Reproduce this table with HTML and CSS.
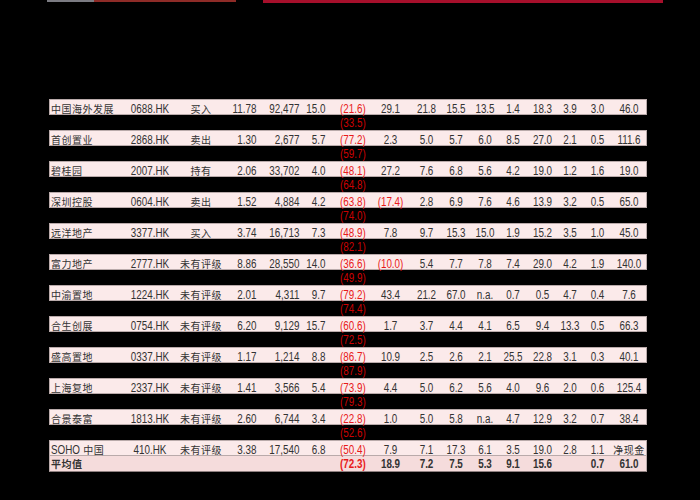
FILE: index.html
```html
<!DOCTYPE html>
<html lang="zh">
<head>
<meta charset="utf-8">
<link rel="stylesheet" href="styles.css">
</head>
<body>
<div class="bars">
  <div class="bar-gray"></div>
  <div class="bar-dark"></div>
  <div class="bar-red"></div>
</div>
<div class="table">
  <div class="row band"><div class="c l cjk">中国海外发展</div><div class="c m">0688.HK</div><div class="c m cjk">买入</div><div class="c r">11.78</div><div class="c r">92,477</div><div class="c r">15.0</div><div class="c neg red">(21.6)</div><div class="c m">29.1</div><div class="c m">21.8</div><div class="c m">15.5</div><div class="c m">13.5</div><div class="c m">1.4</div><div class="c m">18.3</div><div class="c m">3.9</div><div class="c m">3.0</div><div class="c m">46.0</div></div>
  <div class="row gap"><div class="c neg red2 col7">(33.5)</div></div>
  <div class="row band"><div class="c l cjk">首创置业</div><div class="c m">2868.HK</div><div class="c m cjk">卖出</div><div class="c r">1.30</div><div class="c r">2,677</div><div class="c r">5.7</div><div class="c neg red">(77.2)</div><div class="c m">2.3</div><div class="c m">5.0</div><div class="c m">5.7</div><div class="c m">6.0</div><div class="c m">8.5</div><div class="c m">27.0</div><div class="c m">2.1</div><div class="c m">0.5</div><div class="c m">111.6</div></div>
  <div class="row gap"><div class="c neg red2 col7">(59.7)</div></div>
  <div class="row band"><div class="c l cjk">碧桂园</div><div class="c m">2007.HK</div><div class="c m cjk">持有</div><div class="c r">2.06</div><div class="c r">33,702</div><div class="c r">4.0</div><div class="c neg red">(48.1)</div><div class="c m">27.2</div><div class="c m">7.6</div><div class="c m">6.8</div><div class="c m">5.6</div><div class="c m">4.2</div><div class="c m">19.0</div><div class="c m">1.2</div><div class="c m">1.6</div><div class="c m">19.0</div></div>
  <div class="row gap"><div class="c neg red2 col7">(64.8)</div></div>
  <div class="row band"><div class="c l cjk">深圳控股</div><div class="c m">0604.HK</div><div class="c m cjk">卖出</div><div class="c r">1.52</div><div class="c r">4,884</div><div class="c r">4.2</div><div class="c neg red">(63.8)</div><div class="c m red">(17.4)</div><div class="c m">2.8</div><div class="c m">6.9</div><div class="c m">7.6</div><div class="c m">4.6</div><div class="c m">13.9</div><div class="c m">3.2</div><div class="c m">0.5</div><div class="c m">65.0</div></div>
  <div class="row gap"><div class="c neg red2 col7">(74.0)</div></div>
  <div class="row band"><div class="c l cjk">远洋地产</div><div class="c m">3377.HK</div><div class="c m cjk">买入</div><div class="c r">3.74</div><div class="c r">16,713</div><div class="c r">7.3</div><div class="c neg red">(48.9)</div><div class="c m">7.8</div><div class="c m">9.7</div><div class="c m">15.3</div><div class="c m">15.0</div><div class="c m">1.9</div><div class="c m">15.2</div><div class="c m">3.5</div><div class="c m">1.0</div><div class="c m">45.0</div></div>
  <div class="row gap"><div class="c neg red2 col7">(82.1)</div></div>
  <div class="row band"><div class="c l cjk">富力地产</div><div class="c m">2777.HK</div><div class="c m cjk">未有评级</div><div class="c r">8.86</div><div class="c r">28,550</div><div class="c r">14.0</div><div class="c neg red">(36.6)</div><div class="c m red">(10.0)</div><div class="c m">5.4</div><div class="c m">7.7</div><div class="c m">7.8</div><div class="c m">7.4</div><div class="c m">29.0</div><div class="c m">4.2</div><div class="c m">1.9</div><div class="c m">140.0</div></div>
  <div class="row gap"><div class="c neg red2 col7">(49.9)</div></div>
  <div class="row band"><div class="c l cjk">中渝置地</div><div class="c m">1224.HK</div><div class="c m cjk">未有评级</div><div class="c r">2.01</div><div class="c r">4,311</div><div class="c r">9.7</div><div class="c neg red">(79.2)</div><div class="c m">43.4</div><div class="c m">21.2</div><div class="c m">67.0</div><div class="c m">n.a.</div><div class="c m">0.7</div><div class="c m">0.5</div><div class="c m">4.7</div><div class="c m">0.4</div><div class="c m">7.6</div></div>
  <div class="row gap"><div class="c neg red2 col7">(74.4)</div></div>
  <div class="row band"><div class="c l cjk">合生创展</div><div class="c m">0754.HK</div><div class="c m cjk">未有评级</div><div class="c r">6.20</div><div class="c r">9,129</div><div class="c r">15.7</div><div class="c neg red">(60.6)</div><div class="c m">1.7</div><div class="c m">3.7</div><div class="c m">4.4</div><div class="c m">4.1</div><div class="c m">6.5</div><div class="c m">9.4</div><div class="c m">13.3</div><div class="c m">0.5</div><div class="c m">66.3</div></div>
  <div class="row gap"><div class="c neg red2 col7">(72.5)</div></div>
  <div class="row band"><div class="c l cjk">盛高置地</div><div class="c m">0337.HK</div><div class="c m cjk">未有评级</div><div class="c r">1.17</div><div class="c r">1,214</div><div class="c r">8.8</div><div class="c neg red">(86.7)</div><div class="c m">10.9</div><div class="c m">2.5</div><div class="c m">2.6</div><div class="c m">2.1</div><div class="c m">25.5</div><div class="c m">22.8</div><div class="c m">3.1</div><div class="c m">0.3</div><div class="c m">40.1</div></div>
  <div class="row gap"><div class="c neg red2 col7">(87.9)</div></div>
  <div class="row band"><div class="c l cjk">上海复地</div><div class="c m">2337.HK</div><div class="c m cjk">未有评级</div><div class="c r">1.41</div><div class="c r">3,566</div><div class="c r">5.4</div><div class="c neg red">(73.9)</div><div class="c m">4.4</div><div class="c m">5.0</div><div class="c m">6.2</div><div class="c m">5.6</div><div class="c m">4.0</div><div class="c m">9.6</div><div class="c m">2.0</div><div class="c m">0.6</div><div class="c m">125.4</div></div>
  <div class="row gap"><div class="c neg red2 col7">(79.3)</div></div>
  <div class="row band"><div class="c l cjk">合景泰富</div><div class="c m">1813.HK</div><div class="c m cjk">未有评级</div><div class="c r">2.60</div><div class="c r">6,744</div><div class="c r">3.4</div><div class="c neg red">(22.8)</div><div class="c m">1.0</div><div class="c m">5.0</div><div class="c m">5.8</div><div class="c m">n.a.</div><div class="c m">4.7</div><div class="c m">12.9</div><div class="c m">3.2</div><div class="c m">0.7</div><div class="c m">38.4</div></div>
  <div class="row gap"><div class="c neg red2 col7">(52.6)</div></div>
  <div class="row band"><div class="c l mix"><span class="lat">SOHO</span><span class="cjk">中国</span></div><div class="c m">410.HK</div><div class="c m cjk">未有评级</div><div class="c r">3.38</div><div class="c r">17,540</div><div class="c r">6.8</div><div class="c neg red">(50.4)</div><div class="c m">7.9</div><div class="c m">7.1</div><div class="c m">17.3</div><div class="c m">6.1</div><div class="c m">3.5</div><div class="c m">19.0</div><div class="c m">2.8</div><div class="c m">1.1</div><div class="c m cjk">净现金</div></div>
  <div class="row band avg"><div class="c l cjk">平均值</div><div class="c m"></div><div class="c m"></div><div class="c r"></div><div class="c r"></div><div class="c r"></div><div class="c neg red">(72.3)</div><div class="c m">18.9</div><div class="c m">7.2</div><div class="c m">7.5</div><div class="c m">5.3</div><div class="c m">9.1</div><div class="c m">15.6</div><div class="c m"></div><div class="c m">0.7</div><div class="c m">61.0</div></div>
</div>
</body>
</html>
```

FILE: styles.css
```css
html, body {
  margin: 0;
  padding: 0;
  background: #000;
}
body {
  font-family: "Liberation Sans", Arial, sans-serif;
  font-size: 12px;
  color: #333;
}
.bars {
  display: flex;
  align-items: flex-start;
  height: 4px;
  padding-left: 47px;
}
.bar-gray {
  width: 47px;
  height: 2px;
  background: #7b7b82;
}
.bar-dark {
  width: 142px;
  height: 2px;
  background: #8e2b27;
}
.bar-red {
  margin-left: 27px;
  width: 400px;
  height: 3px;
  background: #a60f2b;
}
.table {
  margin-top: 95px;
  margin-left: 49px;
  width: 598px;
}
.row {
  display: grid;
  grid-template-columns: 75px 50px 52px 31px 43px 26px 46px 35px 37px 22px 36px 20px 39px 16px 39px 24px 1fr;
  box-sizing: border-box;
}
.band {
  height: 16px;
  background: #fbeaea;
  border: 1px solid #b9aaaa;
  padding-top: 3px;
}
.gap {
  height: 15px;
  padding: 2px 1px 0 1px;
}
.gap .c {
  line-height: 13px;
}
.avg {
  background: #f5dcdc;
  border-top: none;
  border-bottom: 1px solid #8f8080;
  padding-top: 2px;
  font-weight: bold;
}
.c {
  display: flex;
  white-space: nowrap;
  line-height: 12px;
  transform: scaleX(0.82);
}
.l {
  justify-content: flex-start;
  padding-left: 1px;
  transform-origin: 0 50%;
}
.m {
  justify-content: center;
  transform-origin: 50% 50%;
}
.r {
  justify-content: flex-end;
  padding-right: 2px;
  transform-origin: 100% 50%;
}
.neg {
  justify-content: flex-start;
  padding-left: 13px;
  transform-origin: 13px 50%;
}
.col7 {
  grid-column: 7;
}
.red {
  color: #e81a1a;
}
.red2 {
  color: #cc0000;
}
.cjk {
  font-family: "Noto Sans CJK SC", sans-serif;
  font-size: 10px;
  font-weight: 400;
  letter-spacing: 0.5px;
}
.c.cjk, .c.mix {
  transform: none;
}
.lat {
  display: inline-block;
  transform: scaleX(0.82);
  transform-origin: 0 50%;
  margin-right: -3px;
}
.avg .cjk {
  font-weight: bold;
}
```
